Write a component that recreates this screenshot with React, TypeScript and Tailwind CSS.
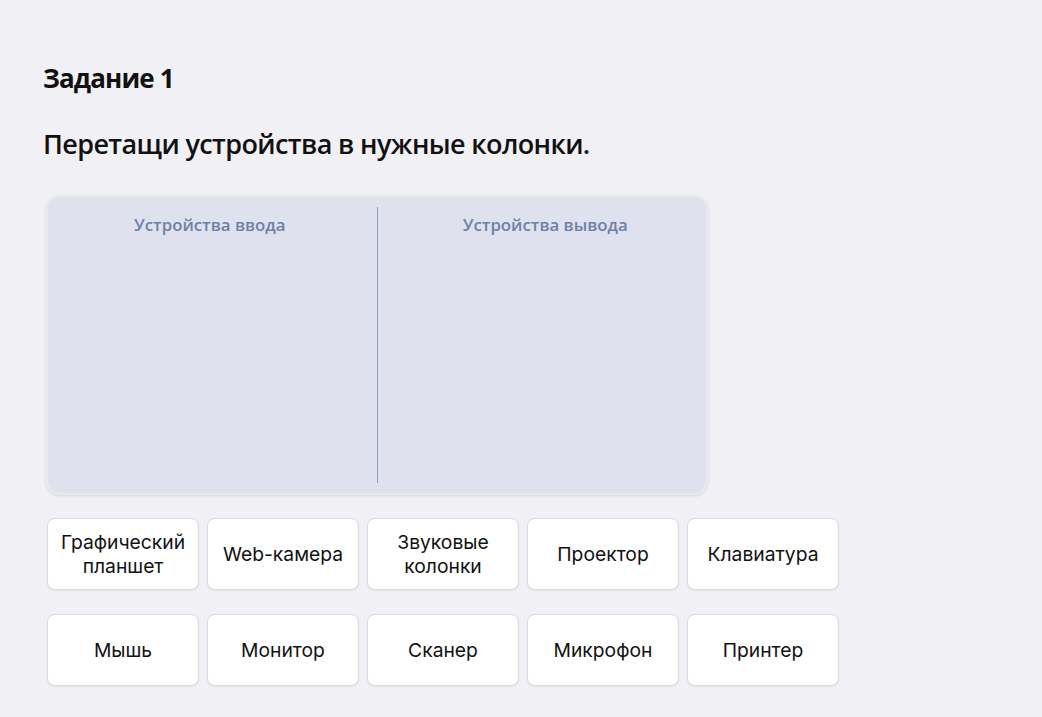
import React from "react";

const rows: string[][] = [
  ["Графический планшет", "Web-камера", "Звуковые колонки", "Проектор", "Клавиатура"],
  ["Мышь", "Монитор", "Сканер", "Микрофон", "Принтер"],
];

function Card({ label }: { label: string }) {
  const parts = label.includes(" ") && label.length > 12 ? label.split(" ") : [label];
  return (
    <div className="w-[152px] h-[72px] flex flex-col items-center justify-center bg-white rounded-[8px] border border-[#dadae3] shadow-[0_1px_2px_rgba(0,0,0,0.06)] text-[19.3px] leading-[24px] text-[#111] text-center">
      {parts.map((p) => (
        <span key={p}>{p}</span>
      ))}
    </div>
  );
}

export default function App() {
  return (
    <div
      className="min-h-[717px] w-[1042px] bg-[#f1f0f5] pl-[43px] pt-[62px]"
      style={{ fontFamily: "Inter, 'Noto Sans', sans-serif" }}
    >
      <h1
        className="text-[26px] leading-[32px] font-bold text-[#111] tracking-[-0.85px]"
        style={{ fontFamily: "'Open Sans', 'Noto Sans', sans-serif" }}
      >
        Задание 1
      </h1>
      <h2
        className="mt-[34px] text-[27px] leading-[32px] font-semibold text-[#111] tracking-[-0.62px]"
        style={{ fontFamily: "'Open Sans', 'Noto Sans', sans-serif" }}
      >
        Перетащи устройства в нужные колонки.
      </h2>

      <div className="mt-[35px] ml-[3px] w-[662px] h-[300px] rounded-[14px] border-2 border-[#e9e9ef] bg-[#dfe1ee] shadow-[0_1px_3px_rgba(0,0,0,0.12)] flex py-[10px]">
        <div className="flex-1 flex justify-center pt-[7px]">
          <span
            className="mr-[5px] text-[16.8px] leading-[22px] text-[#6e81a6] font-semibold"
            style={{ fontFamily: "'Open Sans', 'Noto Sans', sans-serif" }}
          >
            Устройства ввода
          </span>
        </div>
        <div className="w-px bg-[#8c9fc0]" />
        <div className="flex-1 flex justify-center pt-[7px]">
          <span
            className="ml-[7px] text-[16.8px] leading-[22px] text-[#6e81a6] font-semibold"
            style={{ fontFamily: "'Open Sans', 'Noto Sans', sans-serif" }}
          >
            Устройства вывода
          </span>
        </div>
      </div>

      <div className="mt-[23px] ml-[4px] flex flex-col gap-[24px]">
        {rows.map((row, i) => (
          <div key={i} className="flex gap-[8px]">
            {row.map((l) => (
              <Card key={l} label={l} />
            ))}
          </div>
        ))}
      </div>
    </div>
  );
}
